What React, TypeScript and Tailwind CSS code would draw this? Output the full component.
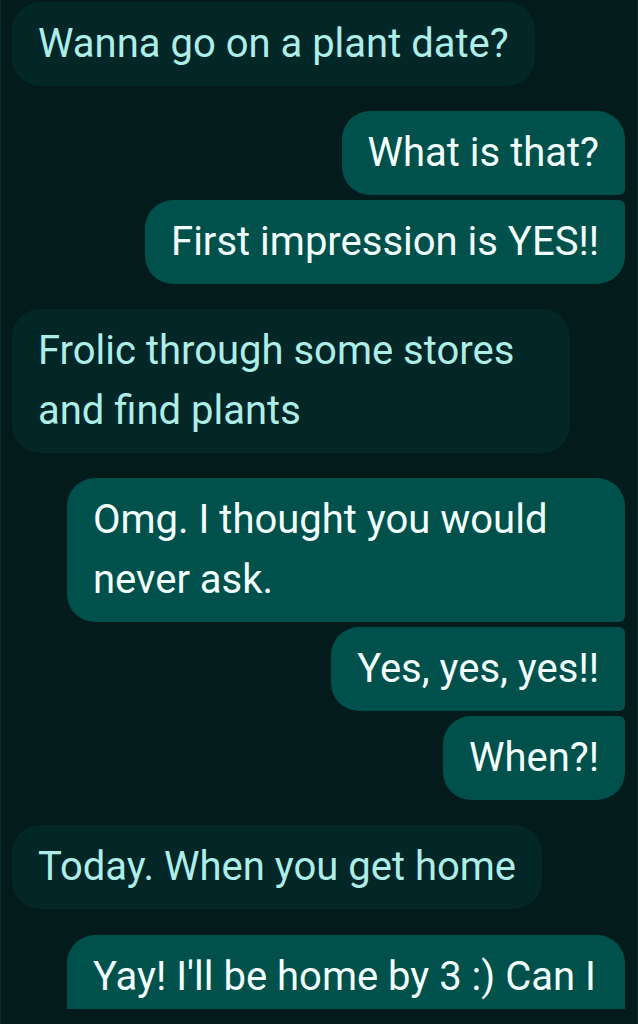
type Msg = {
  text: string;
  from: "me" | "them";
  corners: string;
};

// conversation, grouped by sender; corners picked per position in group
const messages: Msg[] = [
  { text: "Wanna go on a plant date?", from: "them", corners: "rounded-[28px]" },
  { text: "What is that?", from: "me", corners: "rounded-[28px] rounded-br-[6px]" },
  { text: "First impression is YES!!", from: "me", corners: "rounded-[28px] rounded-tr-[6px]" },
  { text: "Frolic through some stores and find plants", from: "them", corners: "rounded-[28px]" },
  { text: "Omg. I thought you would never ask.", from: "me", corners: "rounded-[28px] rounded-br-[6px]" },
  { text: "Yes, yes, yes!!", from: "me", corners: "rounded-[28px] rounded-r-[6px]" },
  { text: "When?!", from: "me", corners: "rounded-[28px] rounded-tr-[6px]" },
  { text: "Today. When you get home", from: "them", corners: "rounded-[28px]" },
];

function Bubble({ msg, spacing }: { msg: Msg; spacing: string }) {
  const mine = msg.from === "me";
  return (
    <div className={`flex ${mine ? "justify-end" : "justify-start"} ${spacing}`}>
      <div
        className={`${msg.corners} max-w-[558px] px-[26px] py-[12px] text-[40px] leading-[60px] ${
          mine ? "bg-[#00514b] text-[#f2fffd]" : "bg-[#032626] text-[#aeeee9]"
        }`}
      >
        {msg.text}
      </div>
    </div>
  );
}

export default function App() {
  return (
    <div
      className="h-[1024px] w-[638px] overflow-hidden bg-[#031b1b] border-x border-[#0c2b2b] pl-[11px] pr-[12px] pt-[2px]"
      style={{ fontFamily: "Roboto, 'Noto Sans', sans-serif" }}
    >
      {messages.map((m, i) => (
        <Bubble
          key={i}
          msg={m}
          spacing={i === 0 ? "" : messages[i - 1].from !== m.from ? "mt-[25px]" : "mt-[5px]"}
        />
      ))}
      <div className="flex justify-end mt-[26px]">
        <div className="h-[74px] w-[558px] overflow-hidden rounded-t-[28px] bg-[#00514b] px-[26px] py-[12px] text-[40px] leading-[60px] text-[#f2fffd]">
          Yay! I'll be home by 3 :) Can I
        </div>
      </div>
    </div>
  );
}
